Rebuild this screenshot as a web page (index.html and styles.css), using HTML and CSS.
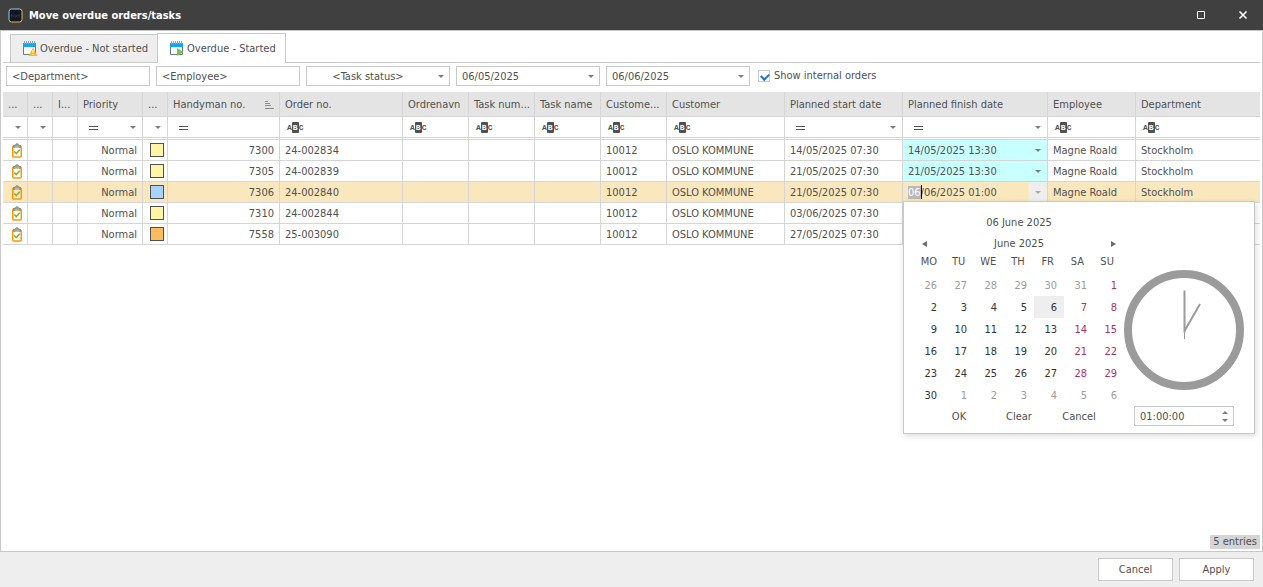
FILE: index.html
```html
<!DOCTYPE html>
<html lang="en">
<head>
  <meta charset="utf-8">
  <title>Move overdue orders/tasks</title>
  <link rel="stylesheet" href="styles.css">
</head>
<body>
  <!-- shared icons -->
  <svg class="sprite" width="0" height="0">
    <symbol id="icon-calendar" viewBox="0 0 16 16">
      <path d="M1.500 5v8.500h12V5" fill="#fff" stroke="#5c7d90"/>
      <path d="M1 2h13v4H1z" fill="#12a5f4"/>
      <path d="M2.500 0v3M4.500 0v3M6.500 0v3M8.500 0v3M10.500 0v3M12.500 0v3" stroke="#90a4ae"/>
    </symbol>
    <symbol id="icon-clipboard" viewBox="0 0 12 15">
      <rect x="1.750" y="3" width="8.500" height="11" rx="1" fill="none" stroke="#ff9800" stroke-width="1.500"/>
      <path d="M2.500 4.500v-2h1.500c0-2.500 4-2.500 4 0h1.500v2z" fill="#90a4ae" stroke="#607d8b" stroke-width=".6"/>
      <path d="M4 3.500h4V5H4z" fill="#ffb74d"/>
      <path d="M3.300 8.500l2 2 3.500-3.700" fill="none" stroke="#7cb342" stroke-width="1.600"/>
    </symbol>
    <symbol id="icon-equals" viewBox="0 0 9 5">
      <path d="M0 1.500h9M0 4.500h9" stroke="#505050" fill="none"/>
    </symbol>
  </svg>

  <div class="window">
    <header class="titlebar">
      <svg class="app-icon" width="15" height="15" viewBox="0 0 15 15">
        <defs>
          <linearGradient id="appBorder" x1="0" y1="0" x2="1" y2="1">
            <stop offset="0.350" stop-color="#8fd3e0"/>
            <stop offset="0.600" stop-color="#f9b72b"/>
          </linearGradient>
        </defs>
        <rect x="1" y="1" width="13" height="13" rx="2.500" fill="#111726" stroke="url(#appBorder)"/>
        <path d="M3.500 6v3M3.500 7.500h2V9M7 7v2h1.500V7M10 9V7h1.500v2" fill="none" stroke="#35312f"/>
      </svg>
      <h1 class="title">Move overdue orders/tasks</h1>
      <button class="window-button" aria-label="Maximize">
        <svg width="10" height="10" viewBox="0 0 10 10"><path d="M1.500 1.500h7v7h-7z" fill="none" stroke="#fff"/></svg>
      </button>
      <button class="window-button" aria-label="Close">
        <svg width="10" height="10" viewBox="0 0 10 10"><path d="M1.500 1.500l7 7M8.500 1.500l-7 7" stroke="#fff" stroke-width="1.600"/></svg>
      </button>
    </header>

    <main class="content">
      <nav class="tabs">
        <button class="tab">
          <svg width="16" height="16" viewBox="0 0 16 16">
            <use href="#icon-calendar"/>
            <path d="M11 6.500l4.500 8.500h-9z" fill="#ffb52b"/>
            <path d="M11 9v3M11 13v1" stroke="#fff"/>
          </svg>
          Overdue - Not started
        </button>
        <button class="tab active">
          <svg width="16" height="16" viewBox="0 0 16 16">
            <use href="#icon-calendar"/>
            <path d="M8 7l6.500 4L8 15z" fill="#7cc242"/>
          </svg>
          Overdue - Started
        </button>
      </nav>

      <div class="filters">
        <input class="field" type="text" value="&lt;Department&gt;" aria-label="Department">
        <input class="field" type="text" value="&lt;Employee&gt;" aria-label="Employee">
        <div class="dropdown">
          <select class="field centered" aria-label="Task status"><option>&lt;Task status&gt;</option></select>
          <span class="arrow"></span>
        </div>
        <div class="dropdown">
          <input class="field" type="text" value="06/05/2025" aria-label="From date">
          <button class="arrow" aria-label="Pick from date"></button>
        </div>
        <div class="dropdown">
          <input class="field" type="text" value="06/06/2025" aria-label="To date">
          <button class="arrow" aria-label="Pick to date"></button>
        </div>
        <label class="check"><input type="checkbox" checked>Show internal orders</label>
      </div>

      <table class="grid">
        <colgroup>
          <col class="col-icon"><col class="col-icon"><col class="col-icon"><col class="col-priority"><col class="col-icon">
          <col class="col-handyman"><col class="col-order"><col class="col-small"><col class="col-small"><col class="col-small"><col class="col-small">
          <col class="col-wide"><col class="col-wide"><col class="col-finish"><col class="col-employee"><col>
        </colgroup>
        <thead>
          <tr class="head">
            <th>...</th><th>...</th><th>I...</th><th>Priority</th><th>...</th>
            <th><span class="sorted">Handyman no.
              <svg width="9" height="8" viewBox="0 0 9 8"><path d="M0 .5h3M0 2.500h5M0 4.500h6M0 7.500h9" stroke="#8c8c8c"/></svg></span></th>
            <th>Order no.</th><th>Ordrenavn</th><th>Task num...</th><th>Task name</th><th>Custome...</th>
            <th>Customer</th><th>Planned start date</th><th>Planned finish date</th><th>Employee</th><th>Department</th>
          </tr>
          <tr class="filter-row">
            <td><button class="arrow" aria-label="Filter"></button></td>
            <td><button class="arrow" aria-label="Filter"></button></td>
            <td></td>
            <td><svg class="equals" width="9" height="5"><use href="#icon-equals"/></svg><button class="arrow" aria-label="Filter priority"></button></td>
            <td><button class="arrow" aria-label="Filter color"></button></td>
            <td><svg class="equals" width="9" height="5"><use href="#icon-equals"/></svg></td>
            <td><span class="abc">A<b>B</b>C</span></td>
            <td><span class="abc">A<b>B</b>C</span></td>
            <td><span class="abc">A<b>B</b>C</span></td>
            <td><span class="abc">A<b>B</b>C</span></td>
            <td><span class="abc">A<b>B</b>C</span></td>
            <td><span class="abc">A<b>B</b>C</span></td>
            <td><svg class="equals" width="9" height="5"><use href="#icon-equals"/></svg><button class="arrow" aria-label="Filter start date"></button></td>
            <td><svg class="equals" width="9" height="5"><use href="#icon-equals"/></svg><button class="arrow" aria-label="Filter finish date"></button></td>
            <td><span class="abc">A<b>B</b>C</span></td>
            <td><span class="abc">A<b>B</b>C</span></td>
          </tr>
        </thead>
        <tbody>
          <tr>
            <td class="icon"><svg width="12" height="15"><use href="#icon-clipboard"/></svg></td><td></td><td></td>
            <td class="num">Normal</td><td class="icon"><span class="swatch yellow"></span></td><td class="num">7300</td>
            <td>24-002834</td><td></td><td></td><td></td><td>10012</td><td>OSLO KOMMUNE</td><td>14/05/2025 07:30</td>
            <td class="changed">14/05/2025 13:30<button class="arrow" aria-label="Pick date"></button></td><td>Magne Roald</td><td>Stockholm</td>
          </tr>
          <tr>
            <td class="icon"><svg width="12" height="15"><use href="#icon-clipboard"/></svg></td><td></td><td></td>
            <td class="num">Normal</td><td class="icon"><span class="swatch yellow"></span></td><td class="num">7305</td>
            <td>24-002839</td><td></td><td></td><td></td><td>10012</td><td>OSLO KOMMUNE</td><td>21/05/2025 07:30</td>
            <td class="changed">21/05/2025 13:30<button class="arrow" aria-label="Pick date"></button></td><td>Magne Roald</td><td>Stockholm</td>
          </tr>
          <tr class="selected">
            <td class="icon"><svg width="12" height="15"><use href="#icon-clipboard"/></svg></td><td></td><td></td>
            <td class="num">Normal</td><td class="icon"><span class="swatch blue"></span></td><td class="num">7306</td>
            <td>24-002840</td><td></td><td></td><td></td><td>10012</td><td>OSLO KOMMUNE</td><td>21/05/2025 07:30</td>
            <td class="editing">
              <input id="finishDate" class="cell-input" type="text" value="06/06/2025 01:00" aria-label="Planned finish date">
              <span class="caret"></span>
              <button class="arrow" aria-label="Pick date"></button>

              <div class="picker">
                <div class="calendar">
                  <div class="today">06 June 2025</div>
                  <div class="month">
                    <button class="prev" aria-label="Previous month"></button>
                    <span>June 2025</span>
                    <button class="next" aria-label="Next month"></button>
                  </div>
                  <div class="weekdays">
                    <span>MO</span><span>TU</span><span>WE</span><span>TH</span><span>FR</span><span>SA</span><span>SU</span>
                  </div>
                  <div class="days" id="days"></div>
                  <div class="actions">
                    <button>OK</button><button>Clear</button><button>Cancel</button>
                  </div>
                </div>
                <div class="time">
                  <svg width="120" height="120" viewBox="0 0 120 120">
                    <circle cx="60" cy="60" r="56" fill="none" stroke="#9b9b9b" stroke-width="8"/>
                    <path d="M60.500 20.500v42M60.500 61L76 34" fill="none" stroke="#9b9b9b" stroke-width="2"/>
                    <path d="M60.500 60v9" stroke="#9b9b9b"/>
                  </svg>
                  <div class="spinner">
                    <input class="field" type="text" value="01:00:00" aria-label="Time">
                    <button class="up" aria-label="Later"></button>
                    <button class="down" aria-label="Earlier"></button>
                  </div>
                </div>
              </div>
            </td>
            <td>Magne Roald</td><td>Stockholm</td>
          </tr>
          <tr>
            <td class="icon"><svg width="12" height="15"><use href="#icon-clipboard"/></svg></td><td></td><td></td>
            <td class="num">Normal</td><td class="icon"><span class="swatch yellow"></span></td><td class="num">7310</td>
            <td>24-002844</td><td></td><td></td><td></td><td>10012</td><td>OSLO KOMMUNE</td><td>03/06/2025 07:30</td>
            <td></td><td></td><td></td>
          </tr>
          <tr>
            <td class="icon"><svg width="12" height="15"><use href="#icon-clipboard"/></svg></td><td></td><td></td>
            <td class="num">Normal</td><td class="icon"><span class="swatch orange"></span></td><td class="num">7558</td>
            <td>25-003090</td><td></td><td></td><td></td><td>10012</td><td>OSLO KOMMUNE</td><td>27/05/2025 07:30</td>
            <td></td><td></td><td></td>
          </tr>
        </tbody>
      </table>

      <div class="entries">5 entries</div>
    </main>

    <footer class="footer">
      <button class="button">Cancel</button>
      <button class="button">Apply</button>
    </footer>
  </div>

  <script>
    const days = document.getElementById('days');
    const start = new Date(2025, 4, 26);

    // Six weeks, beginning on the Monday before June 1st
    for (let i = 0; i < 42; i++) {
      const date = new Date(start.getFullYear(), start.getMonth(), start.getDate() + i);
      const day = document.createElement('button');
      day.textContent = date.getDate();
      if (date.getMonth() !== 5) {
        day.className = 'other';
      } else if (i % 7 > 4) {
        day.className = 'weekend';
      } else if (date.getDate() === 6) {
        day.className = 'current';
      }
      days.appendChild(day);
    }

    // Day part of the date is being edited
    const finishDate = document.getElementById('finishDate');
    finishDate.focus();
    finishDate.setSelectionRange(0, 2);
  </script>
</body>
</html>
```

FILE: styles.css
```css
* {
  box-sizing: border-box;
}

body {
  margin: 0;
  font-family: Tahoma, 'DejaVu Sans Condensed', 'Noto Sans', sans-serif;
  font-size: 11px;
  line-height: 14px;
  color: #505050;
}

button, input, select {
  font: inherit;
  color: inherit;
  margin: 0;
}

button {
  padding: 0;
  border: none;
  background: none;
}

.sprite {
  position: absolute;
}

.window {
  display: flex;
  flex-direction: column;
  min-height: 100vh;
}

.titlebar {
  display: flex;
  align-items: center;
  height: 31px;
  padding: 0 5px 0 8px;
  background: #404040;
  border-bottom: 1px solid #c8c8c8;
}

.title {
  flex: 1;
  margin: 0 0 0 6px;
  padding-top: 1px;
  font-size: 11px;
  color: #fff;
}

.window-button {
  display: flex;
  align-items: center;
  justify-content: center;
  width: 30px;
  height: 30px;
  margin-left: 12px;
}

.content {
  flex: 1;
  display: flex;
  flex-direction: column;
  border: 1px solid #c8c8c8;
  border-top: none;
  padding: 2px;
}

.tabs {
  display: flex;
  align-items: flex-end;
  height: 30px;
  padding-left: 7px;
  border-bottom: 1px solid #c8c8c8;
}

.tab {
  display: flex;
  align-items: center;
  gap: 2px;
  height: 28px;
  padding: 0 9px 0 11px;
  background: #eee;
  border: 1px solid #c8c8c8;
  border-bottom: none;
  border-right: none;
}

.tab.active {
  height: 30px;
  margin-bottom: -1px;
  background: #fff;
  border-right: 1px solid #c8c8c8;
}

.filters {
  display: flex;
  align-items: center;
  gap: 6px;
  padding: 3px;
}

.field {
  width: 144px;
  height: 20px;
  padding: 0 5px;
  border: 1px solid #c8c8c8;
  border-radius: 0;
  background: #fff;
  outline: none;
}

.dropdown {
  position: relative;
  display: flex;
}

select.field {
  appearance: none;
}

.centered {
  padding: 1px 25px 0 5px;
  text-align: center;
}

.arrow {
  position: absolute;
  top: 0;
  right: 0;
  width: 18px;
  height: 20px;
  pointer-events: none;
}

.arrow::before {
  content: '';
  position: absolute;
  top: 9px;
  left: 6px;
  border: 3px solid transparent;
  border-top-color: #7d7d7d;
  border-bottom: none;
}

.check {
  display: flex;
  align-items: center;
  gap: 4px;
  padding-left: 2px;
}

.check input {
  appearance: none;
  position: relative;
  width: 12px;
  height: 12px;
  border: 1px solid #c8c8c8;
  background: #fff;
}

.check input:checked::after {
  content: '';
  position: absolute;
  left: 3px;
  top: 1px;
  width: 4px;
  height: 6px;
  border: solid #1f6fd0;
  border-width: 0 2px 2px 0;
  transform: rotate(45deg);
}

/* Grid */

.grid {
  width: 100%;
  margin-top: 3px;
  table-layout: fixed;
  border-collapse: separate;
  border-spacing: 0;
}

.col-icon { width: 25px; }
.col-priority { width: 65px; }
.col-handyman { width: 112px; }
.col-order { width: 123px; }
.col-small { width: 66px; }
.col-wide { width: 118px; }
.col-finish { width: 145px; }
.col-employee { width: 88px; }

.grid th,
.grid td {
  position: relative;
  height: 21px;
  padding: 1px 5px 0;
  border-right: 1px solid #d5d5d5;
  border-bottom: 1px solid #d5d5d5;
  font-weight: normal;
  text-align: left;
  white-space: nowrap;
}

.grid th:last-child,
.grid td:last-child {
  border-right: none;
}

.grid .head th {
  height: 25px;
  background: #e4e4e4;
}

.sorted {
  display: flex;
  align-items: center;
  justify-content: space-between;
}

.grid .filter-row td {
  height: 23px;
  padding-top: 0;
  border-bottom: 3px double #d5d5d5;
}

.filter-row .equals {
  display: block;
  margin-left: 6px;
}

.abc {
  display: flex;
  align-items: center;
  padding-left: 2px;
  font: bold 8px/11px 'Liberation Mono', monospace;
}

.abc b {
  padding: 0 1px;
  border-radius: 1px;
  background: #505050;
  color: #fff;
}

.grid .num {
  text-align: right;
}

.grid .icon {
  padding: 0 0 0 4px;
}

.icon svg,
.swatch {
  display: block;
  margin: 0 auto;
}

.swatch {
  width: 14px;
  height: 14px;
  border: 1px solid #505050;
}

.yellow { background: #fff5a5; }
.blue { background: #a6d3ff; }
.orange { background: #ffbb5e; }

.changed {
  background: #c8ffff;
}

.selected td {
  background: #fae7bd;
}

.grid .editing {
  padding-top: 0;
}

.cell-input {
  display: block;
  width: 120px;
  height: 20px;
  padding: 0;
  border: none;
  background: none;
  outline: none;
}

.cell-input::selection {
  background: #b9b9b9;
  color: #fff;
}

.caret {
  position: absolute;
  left: 18px;
  top: 3px;
  width: 1px;
  height: 14px;
  background: #000;
}

.editing .arrow {
  background: #eee;
}

.editing .arrow::before {
  border-top-color: #a8a8a8;
}

/* Date and time picker */

.picker {
  position: absolute;
  z-index: 10;
  top: 19px;
  left: 0;
  display: flex;
  width: 352px;
  padding: 10px 10px 7px;
  background: #fff;
  border: 1px solid #c8c8c8;
  box-shadow: 1px 2px 6px rgba(0, 0, 0, 0.15);
}

.calendar {
  width: 210px;
  text-align: center;
}

.today {
  line-height: 22px;
}

.month {
  display: flex;
  align-items: center;
  justify-content: space-between;
  height: 20px;
  padding: 0 8px;
}

.prev,
.next {
  border: 3px solid transparent;
}

.prev {
  border-left: none;
  border-right: 5px solid #6b6b6b;
}

.next {
  border-right: none;
  border-left: 5px solid #6b6b6b;
}

.weekdays,
.days {
  display: grid;
  grid-template-columns: repeat(7, 1fr);
}

.weekdays {
  height: 20px;
  padding-right: 2px;
  line-height: 16px;
}

.days button {
  height: 22px;
  padding: 1px 7px 0 0;
  text-align: right;
  color: #333;
}

.days .other {
  color: #9b9b9b;
}

.days .weekend {
  color: #a8326a;
}

.days .current {
  background: #eee;
}

.actions {
  display: grid;
  grid-template-columns: repeat(3, 1fr);
  height: 20px;
  padding: 1px 15px 0;
}

.time {
  display: flex;
  flex-direction: column;
  align-items: center;
  justify-content: flex-end;
  gap: 16px;
}

.time svg {
  display: block;
}

.spinner {
  position: relative;
  display: flex;
}

.spinner .field {
  width: 100px;
}

.up,
.down {
  position: absolute;
  right: 6px;
  border: 3px solid transparent;
}

.up {
  top: 5px;
  border-top: none;
  border-bottom-color: #7d7d7d;
}

.down {
  bottom: 4px;
  border-bottom: none;
  border-top-color: #7d7d7d;
}

.entries {
  align-self: flex-end;
  margin-top: auto;
  padding: 0 3px;
  background: #d5d5d5;
}

.footer {
  display: flex;
  justify-content: flex-end;
  gap: 6px;
  padding: 6px 9px;
  background: #eee;
}

.button {
  width: 75px;
  height: 23px;
  padding-top: 1px;
  background: #fff;
  border: 1px solid #c8c8c8;
}
```
